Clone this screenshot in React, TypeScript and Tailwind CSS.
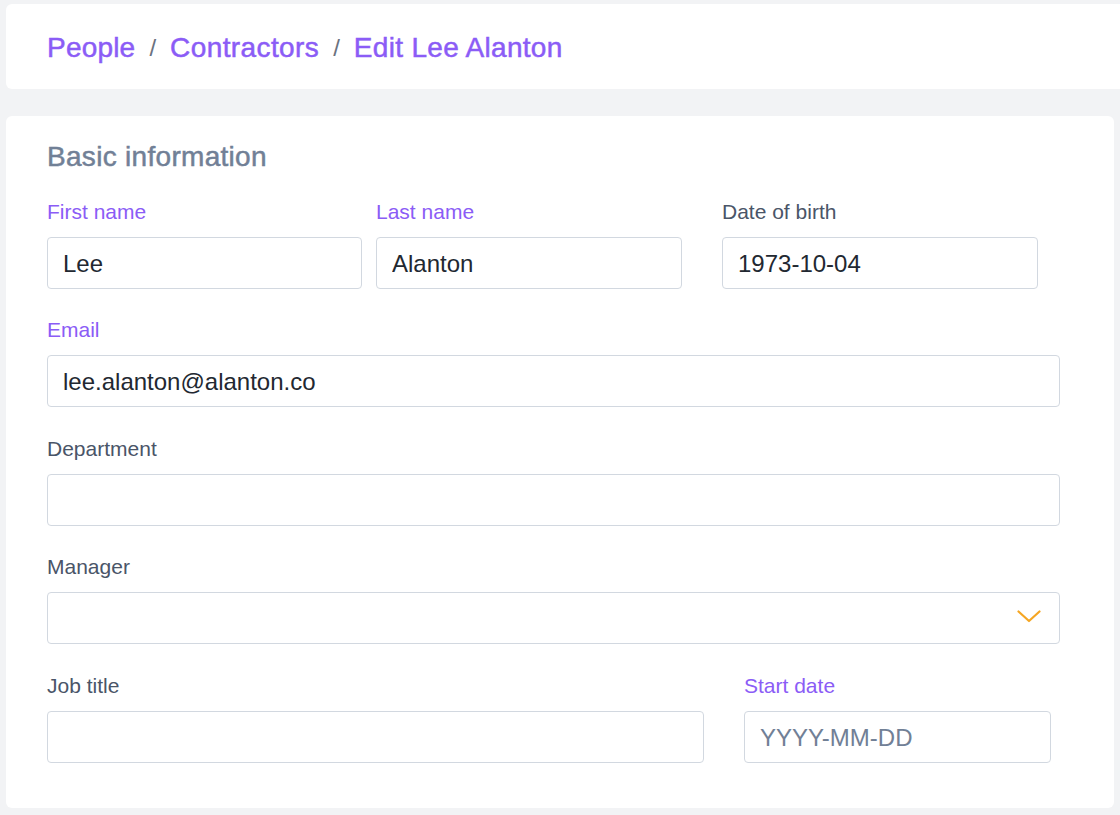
const font = { fontFamily: '"Liberation Sans", Arial, sans-serif' };

function Field({ label, value, placeholder, active, width, select }: { label: string; value?: string; placeholder?: string; active?: boolean; width: string; select?: boolean }) {
  return (
    <div className={width}>
      <label className={`block h-[26px] text-[21px] leading-[26px] ${active ? "text-[#8b5cf6]" : "text-[#4a5568]"}`}>{label}</label>
      <div className="relative mt-[12px]">
        <input
          readOnly
          defaultValue={value}
          placeholder={placeholder}
          className="block h-[52px] w-full rounded-[4px] border border-[#d2d8e0] bg-white px-[15px] pt-[2px] text-[24px] text-[#222831] outline-none placeholder:text-[#718096]"
        />
        {select && (
          <svg className="absolute right-[19px] top-[18px]" width="24" height="13" viewBox="0 0 24 13" fill="none">
            <polyline points="1.5,1.5 12,11 22.5,1.5" stroke="#f5a623" strokeWidth="2.2" strokeLinecap="round" strokeLinejoin="round" />
          </svg>
        )}
      </div>
    </div>
  );
}

export default function App() {
  return (
    <div className="min-h-[815px] w-[1120px] overflow-hidden bg-[#f2f3f5] pt-[4px]" style={font}>
      <div className="ml-[6px] mr-[-20px] flex h-[85px] items-center rounded-[6px] bg-white pl-[41px] pt-[2px] text-[28px] [-webkit-text-stroke:0.5px]">
        <span className="tracking-[0.2px] text-[#8b5cf6]">People</span>
        <span className="mx-[14px] text-[24px] text-[#6b7280] [-webkit-text-stroke:0px]">/</span>
        <span className="tracking-[0.4px] text-[#8b5cf6]">Contractors</span>
        <span className="mx-[14px] text-[24px] text-[#6b7280] [-webkit-text-stroke:0px]">/</span>
        <span className="tracking-[0.3px] text-[#8b5cf6]">Edit Lee Alanton</span>
      </div>
      <div className="mx-[6px] mt-[27px] rounded-[6px] bg-white pb-[45px] pl-[41px] pt-[24px]">
        <h2 className="text-[28px] leading-[34px] tracking-[0.3px] text-[#718096] [-webkit-text-stroke:0.5px]">Basic information</h2>
        <div className="mt-[25px] w-[1013px]">
          <div className="flex">
            <Field label="First name" value="Lee" active width="w-[315px]" />
            <Field label="Last name" value="Alanton" active width="ml-[14px] w-[306px]" />
            <Field label="Date of birth" value="1973-10-04" width="ml-[40px] w-[316px]" />
          </div>
          <div className="mt-[28px]">
            <Field label="Email" value="lee.alanton@alanton.co" active width="w-full" />
          </div>
          <div className="mt-[29px]">
            <Field label="Department" width="w-full" />
          </div>
          <div className="mt-[28px]">
            <Field label="Manager" width="w-full" select />
          </div>
          <div className="mt-[29px] flex">
            <Field label="Job title" width="w-[657px]" />
            <Field label="Start date" placeholder="YYYY-MM-DD" active width="ml-[40px] w-[307px]" />
          </div>
        </div>
      </div>
    </div>
  );
}
